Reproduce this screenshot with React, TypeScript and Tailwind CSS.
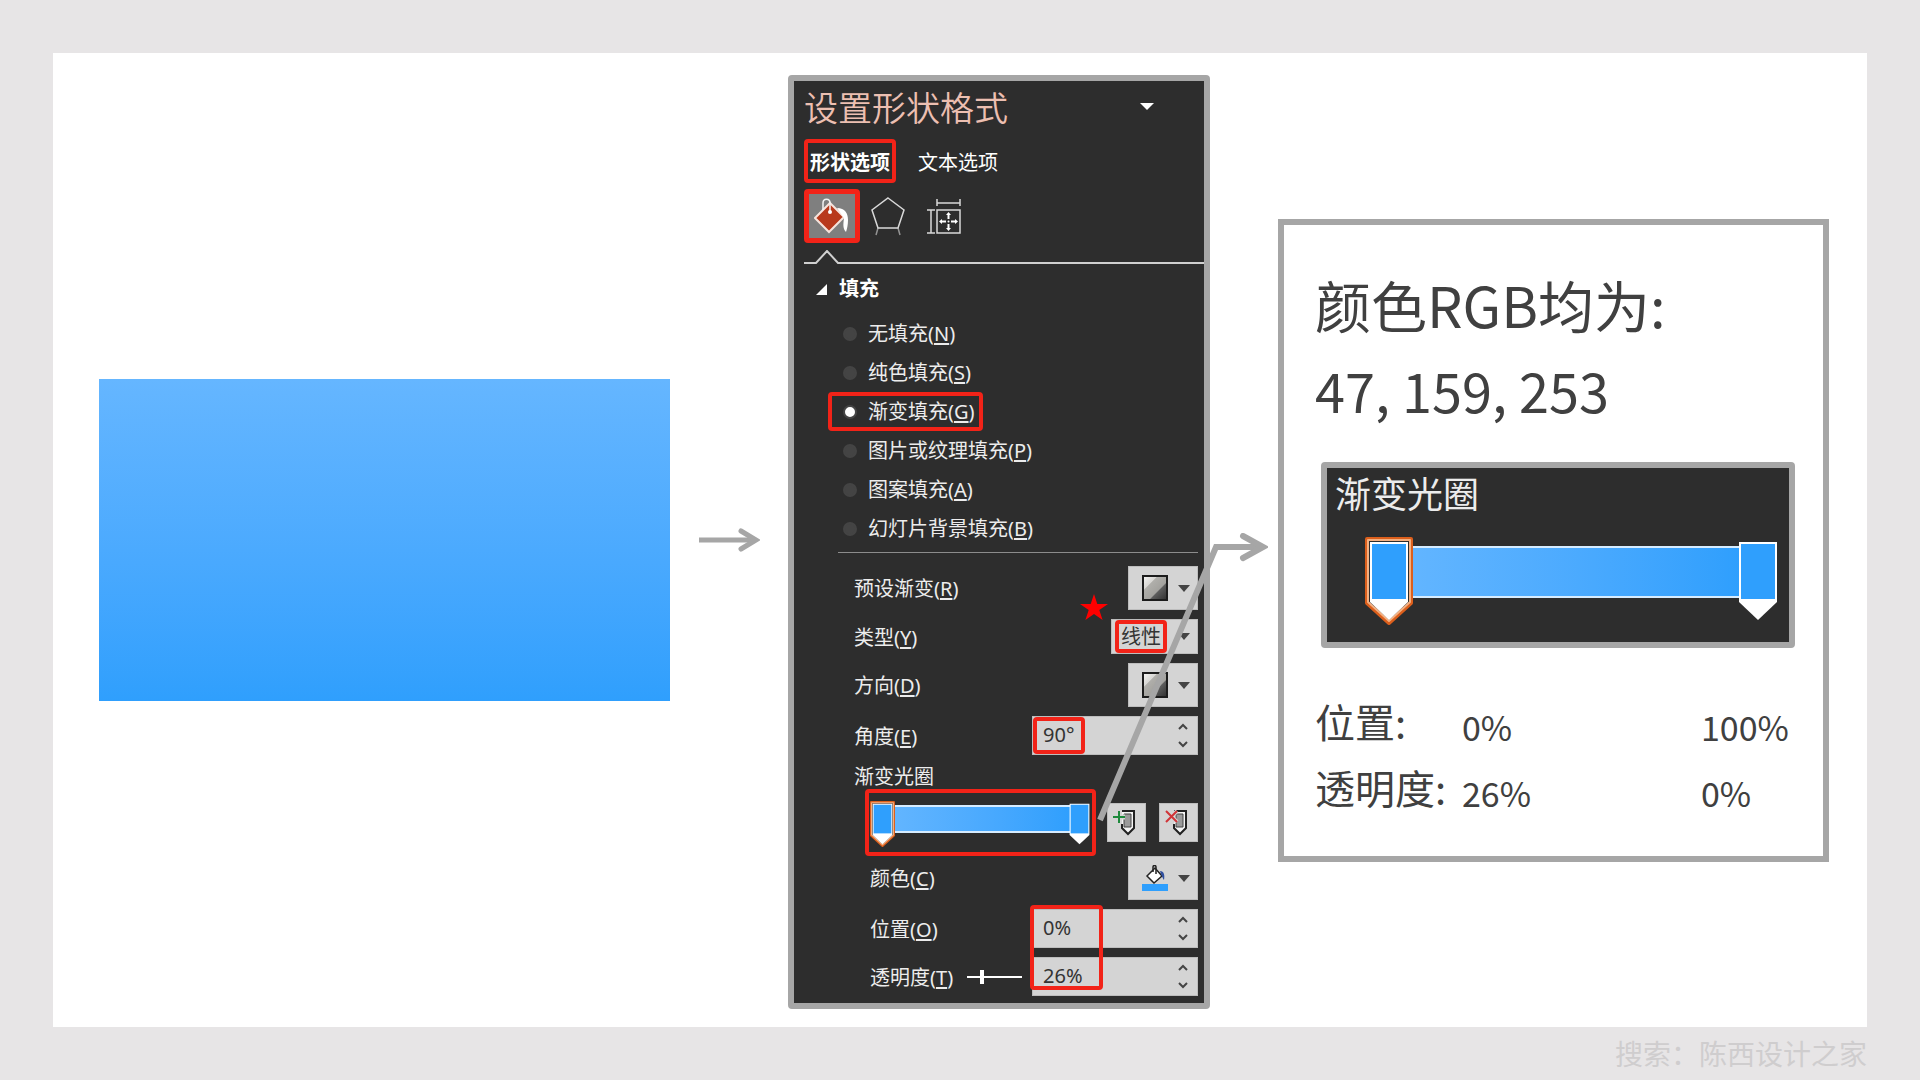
import { useState } from "react";
import type { ReactNode } from "react";

interface FillOption {
    id: string;
    label: string;
    hotkey: string;
}

const fillOptions: FillOption[] = [
    { id: "none", label: "无填充", hotkey: "N" },
    { id: "solid", label: "纯色填充", hotkey: "S" },
    { id: "gradient", label: "渐变填充", hotkey: "G" },
    { id: "picture", label: "图片或纹理填充", hotkey: "P" },
    { id: "pattern", label: "图案填充", hotkey: "A" },
    { id: "slide", label: "幻灯片背景填充", hotkey: "B" },
];

const stopRows = [
    { label: "位置:", first: "0%", last: "100%" },
    { label: "透明度:", first: "26%", last: "0%" },
];

function Hotkey({ label, hotkey }: { label: string; hotkey: string }) {
    return (
        <span className="whitespace-nowrap">
            {label}(<span className="underline underline-offset-2">{hotkey}</span>)
        </span>
    );
}

function Field({
    id,
    label,
    hotkey,
    indent,
    extra,
    children,
}: {
    id: string;
    label: string;
    hotkey: string;
    indent?: boolean;
    extra?: ReactNode;
    children: ReactNode;
}) {
    return (
        <div className={`flex items-center ${indent ? "pl-4" : ""}`}>
            <label htmlFor={id} className="pt-0.5">
                <Hotkey label={label} hotkey={hotkey} />
            </label>
            {extra}
            <div className="ml-auto">{children}</div>
        </div>
    );
}

function Caret() {
    return (
        <svg className="h-[7px] w-3" viewBox="0 0 12 7" aria-hidden="true">
            <path d="M0 0h12L6 7z" fill="#444" />
        </svg>
    );
}

function Swatch() {
    return (
        <span className="h-[26px] w-[26px] border-2 border-[#1c1c1c] bg-[linear-gradient(135deg,#f2f2f0_0%,#d8d7d4_28%,#b0afab_30%,#a3a29e_62%,#5c5c5c_66%,#333_100%)]" />
    );
}

function DropButton({
    id,
    children,
}: {
    id: string;
    children: ReactNode;
}) {
    return (
        <button
            id={id}
            type="button"
            className="flex h-11 w-[70px] items-center justify-between border border-[#bdbdbd] bg-[#d4d4d4] pr-[7px] pl-[13px]"
        >
            {children}
            <Caret />
        </button>
    );
}

function Spinner({
    id,
    value,
    marked,
}: {
    id: string;
    value: string;
    marked?: boolean;
}) {
    const [text, setText] = useState(value);

    return (
        <div className="relative flex h-[39px] w-[166px] border border-[#bdbdbd] bg-[#d4d4d4]">
            <input
                id={id}
                type="text"
                value={text}
                onChange={(e) => setText(e.target.value)}
                className="min-w-0 flex-1 bg-transparent pb-0.5 pl-2.5 text-[#333] outline-none"
            />
            <div className="flex w-7 flex-col items-center justify-between py-1">
                <button type="button" aria-label="增加" className="h-3">
                    <svg className="h-3 w-3" viewBox="0 0 12 12" fill="none" stroke="#444" strokeWidth="2">
                        <path d="M2 8l4-4 4 4" />
                    </svg>
                </button>
                <button type="button" aria-label="减少" className="h-3">
                    <svg className="h-3 w-3" viewBox="0 0 12 12" fill="none" stroke="#444" strokeWidth="2">
                        <path d="M2 4l4 4 4-4" />
                    </svg>
                </button>
            </div>
            {marked && (
                <span className="pointer-events-none absolute inset-y-0 left-0 w-[52px] rounded border-4 border-[#f22318]" />
            )}
        </div>
    );
}

function StopHandle({ selected, large }: { selected?: boolean; large?: boolean }) {
    return (
        <button
            type="button"
            aria-label="渐变光圈"
            className={`relative shrink-0 ${large ? "h-[88px] w-12" : "h-[46px] w-[25px]"}`}
        >
            <svg className="h-full w-full" viewBox="0 0 48 88" aria-hidden="true">
                {selected && (
                    <>
                        <path d="M2 2h44v64L24 86 2 66z" fill="#2d2d2d" stroke="#dc5f1c" strokeWidth="4" strokeLinejoin="round" />
                        <path d="M3 3h42v62L24 84 3 65z" fill="none" stroke="#f3b183" strokeWidth="2" strokeLinejoin="round" />
                    </>
                )}
                <path d="M5 5h38v60L24 83 5 65z" fill="#fff" />
                <path d="M7 7h34v55H7z" fill="#2f9ffd" />
            </svg>
        </button>
    );
}

function GradientBar({ large }: { large?: boolean }) {
    return (
        <div className="flex items-start">
            <StopHandle selected large={large} />
            <div
                className={`flex-1 border-y-2 border-[#d6ecff] bg-linear-to-r from-[#62b5ff] to-[#2f9ffd] ${
                    large ? "mt-[9px] -mr-1.5 h-[52px]" : "mt-1 -mr-1 h-7"
                }`}
            />
            <StopHandle large={large} />
        </div>
    );
}

function StopIcon({ remove }: { remove?: boolean }) {
    return (
        <svg className="h-7 w-6" viewBox="0 0 24 28" fill="none" aria-hidden="true">
            <path d="M9 2h12v17l-6 6-6-6v-4" fill="#f4f4f4" stroke="#222" strokeWidth="2" />
            <path d="M11 5h7v13h-7z" fill="#9b9b9b" stroke="#444" strokeWidth="1" />
            {remove ? (
                <path d="M1 2l11 11M12 2L1 13" stroke="#d4d4d4" strokeWidth="4" />
            ) : (
                <path d="M1 8h11M6 2v12" stroke="#d4d4d4" strokeWidth="5" />
            )}
            {remove ? (
                <path d="M1 2l11 11M12 2L1 13" stroke="#d13438" strokeWidth="2" />
            ) : (
                <path d="M0 8h12M6 2v12" stroke="#1e8a3c" strokeWidth="2" />
            )}
        </svg>
    );
}

function FormatPanel() {
    const [fill, setFill] = useState("gradient");
    const [alpha, setAlpha] = useState(26);

    return (
        <section className="relative mt-1 w-[422px] shrink-0 rounded border-[6px] border-[#a6a6a6] bg-[#2d2d2d] pb-[7px] pl-2.5 text-xl leading-6 text-[#ececec]">
            <header className="flex h-[54px] items-center justify-between pr-[50px]">
                <h1 className="text-[34px] leading-10 font-[350] text-[#ecbfb1]">设置形状格式</h1>
                <button type="button" aria-label="任务窗格选项" className="pb-1">
                    <svg className="h-[7px] w-3.5" viewBox="0 0 14 7" aria-hidden="true">
                        <path d="M0 0h14L7 7z" fill="#fff" />
                    </svg>
                </button>
            </header>

            <div className="mt-1 flex gap-[22px]">
                <button type="button" className="h-11 rounded border-4 border-[#f22318] px-0.5 pt-1 font-bold text-white">
                    形状选项
                </button>
                <button type="button" className="pt-1 text-white">
                    文本选项
                </button>
            </div>

            <div className="mt-1.5 flex items-center gap-2.5">
                <button
                    type="button"
                    aria-label="填充与线条"
                    className="flex h-[54px] w-14 items-center justify-center rounded border-[5px] border-[#f22318] bg-[#7f7f7f]"
                >
                    <svg className="h-9 w-9" viewBox="0 0 36 36" fill="none" aria-hidden="true">
                        <path d="M1 20L16 5l14 14-15 15z" fill="#b8391c" stroke="#f6e3dc" strokeWidth="2" />
                        <path d="M9 12V5c0-5 7-5 7 0v9" stroke="#f4f4f4" strokeWidth="1.5" />
                        <circle cx="16" cy="14" r="2" fill="#fff" />
                        <path d="M23 10c8 0 11 5 11 12 0 5-1 9-2 12-3-3-3-7-2-14z" fill="#fff" />
                    </svg>
                </button>
                <button type="button" aria-label="效果">
                    <svg className="h-10 w-9" viewBox="0 0 36 40" fill="none" stroke="#d9d9d9" strokeWidth="1.5" aria-hidden="true">
                        <path d="M18 2l16 12-6 18H8L2 14z" />
                        <path d="M8 32l-2 7M28 32l2 7" opacity=".6" />
                    </svg>
                </button>
                <button type="button" aria-label="大小与属性" className="ml-2.5">
                    <svg className="h-9 w-9" viewBox="0 0 36 36" fill="none" stroke="#d9d9d9" strokeWidth="1.5" aria-hidden="true">
                        <path d="M11 12h23v23H11zM11 1v7M34 1v7M11 5h23M1 12h8M1 35h8M5 12v23" />
                        <path d="M22.5 16v5M22.5 26v5M15 23.5h5M25 23.5h5" strokeWidth="2" stroke="#fff" />
                        <path d="M20 17l2.5-3 2.5 3zM20 30l2.5 3 2.5-3zM16 21l-3 2.500 3 2.500zM29 21l3 2.500-3 2.500z" fill="#fff" stroke="none" />
                        <circle cx="22.5" cy="23.5" r="1" fill="#fff" stroke="none" />
                    </svg>
                </button>
            </div>

            <div className="mt-[7px] flex items-end">
                <svg className="h-3.5 w-9 shrink-0" viewBox="0 0 36 14" fill="none" stroke="#d0d0d0" strokeWidth="2" aria-hidden="true">
                    <path d="M0 13h12L23 1l11 12h2" />
                </svg>
                <div className="h-0.5 flex-1 bg-[#d0d0d0]" />
            </div>

            <h2 className="flex h-[50px] items-center gap-3 pl-3 font-bold text-white">
                <svg className="h-[11px] w-[11px]" viewBox="0 0 11 11" aria-hidden="true">
                    <path d="M11 0v11H0z" fill="#fff" />
                </svg>
                填充
            </h2>

            <div role="radiogroup" aria-label="填充" className="flex flex-col items-start pl-6">
                {fillOptions.map((option) => (
                    <label
                        key={option.id}
                        className={`flex h-[39px] items-center gap-[11px] rounded border-4 pr-1 pl-[11px] ${
                            fill === option.id ? "border-[#f22318]" : "border-transparent"
                        }`}
                    >
                        <input
                            type="radio"
                            name="fill"
                            checked={fill === option.id}
                            onChange={() => setFill(option.id)}
                            className="h-3.5 w-3.5 appearance-none rounded-full border-2 border-[#444] bg-[#444] checked:bg-white"
                        />
                        <Hotkey label={option.label} hotkey={option.hotkey} />
                    </label>
                ))}
            </div>

            <hr className="mt-1 mr-1.5 ml-[34px] border-[#8c8c8c]" />

            <div className="mt-[13px] mr-1.5 ml-[50px] flex flex-col gap-[9px]">
                <Field id="preset" label="预设渐变" hotkey="R">
                    <DropButton id="preset">
                        <Swatch />
                    </DropButton>
                </Field>

                <Field id="type" label="类型" hotkey="Y">
                    <div className="relative flex h-[35px] w-[87px] items-center border border-[#bdbdbd] bg-[#d4d4d4]">
                        <select
                            id="type"
                            className="h-full w-full appearance-none bg-transparent pl-[9px] text-[#333] outline-none"
                        >
                            <option>线性</option>
                            <option>射线</option>
                        </select>
                        <span className="pointer-events-none absolute right-[7px] flex">
                            <Caret />
                        </span>
                        <span className="pointer-events-none absolute inset-y-0 left-[3px] w-[52px] rounded border-4 border-[#f22318]" />
                        <svg className="pointer-events-none absolute -top-[26px] -left-8 h-[26px] w-7" viewBox="0 0 28 26" aria-hidden="true">
                            <path d="M14 0l3.3 10H28l-8.7 6.1L22.6 26 14 19.9 5.4 26l3.3-9.9L0 10h10.7z" fill="#f00" />
                        </svg>
                    </div>
                </Field>

                <Field id="direction" label="方向" hotkey="D">
                    <DropButton id="direction">
                        <Swatch />
                    </DropButton>
                </Field>

                <Field id="angle" label="角度" hotkey="E">
                    <Spinner id="angle" value="90°" marked />
                </Field>

                <div>
                    <p className="pt-px">渐变光圈</p>
                    <div className="flex h-[67px] items-center justify-between pl-[11px]">
                        <div className="h-full w-[231px] rounded border-4 border-[#f22318] pt-2 pl-px">
                            <GradientBar />
                        </div>
                        <div className="flex gap-[13px]">
                            <button
                                type="button"
                                aria-label="添加渐变光圈"
                                className="flex h-[39px] w-[39px] items-center border border-[#bdbdbd] bg-[#d4d4d4] pl-[5px]"
                            >
                                <StopIcon />
                            </button>
                            <button
                                type="button"
                                aria-label="删除渐变光圈"
                                className="flex h-[39px] w-[39px] items-center border border-[#bdbdbd] bg-[#d4d4d4] pl-[5px]"
                            >
                                <StopIcon remove />
                            </button>
                        </div>
                    </div>
                    <Field id="color" label="颜色" hotkey="C" indent>
                        <DropButton id="color">
                            <svg className="h-[26px] w-[26px]" viewBox="0 0 26 26" fill="none" aria-hidden="true">
                                <path d="M5 11l8-8 7 8-8 7z" fill="#fff" stroke="#222" strokeWidth="1.5" />
                                <path d="M11 7V2c0-2 3-2 3 0v7" stroke="#222" strokeWidth="1.5" />
                                <path d="M18 6c4 0 5 4 4 9-1-1-2-4-3-6z" fill="#2f4f9f" />
                                <path d="M0 19h26v7H0z" fill="#2f9ffd" />
                            </svg>
                        </DropButton>
                    </Field>
                </div>

                <div className="relative flex flex-col gap-[9px]">
                    <Field id="position" label="位置" hotkey="O" indent>
                        <Spinner id="position" value="0%" />
                    </Field>
                    <Field
                        id="alpha"
                        label="透明度"
                        hotkey="T"
                        indent
                        extra={
                            <input
                                type="range"
                                aria-label="透明度"
                                value={alpha}
                                onChange={(e) => setAlpha(Number(e.target.value))}
                                className="ml-3.5 h-3.5 w-[55px] appearance-none bg-[linear-gradient(#fff,#fff)] bg-[length:100%_2px] bg-center bg-no-repeat [&::-webkit-slider-thumb]:h-3.5 [&::-webkit-slider-thumb]:w-1 [&::-webkit-slider-thumb]:appearance-none [&::-webkit-slider-thumb]:bg-white"
                            />
                        }
                    >
                        <Spinner id="alpha" value="26%" />
                    </Field>
                    <span className="pointer-events-none absolute -top-1 right-[95px] bottom-1.5 w-[73px] rounded border-4 border-[#f22318]" />
                </div>
            </div>

            {/* Leader line from the stops bar to the notes */}
            <svg
                className="pointer-events-none absolute -right-16 bottom-[180px] h-[290px] w-[172px]"
                viewBox="0 0 172 290"
                fill="none"
                stroke="#a6a6a6"
                strokeWidth="6"
                aria-hidden="true"
            >
                <path d="M4 287L120 14h48" />
                <path d="M147 3l20 11-20 11" strokeLinecap="round" />
            </svg>
        </section>
    );
}

function NotesPanel() {
    return (
        <section className="w-[551px] shrink-0 border-[6px] border-[#a6a6a6] px-[31px] pt-9 pb-9 font-['Noto_Sans_CJK_SC',sans-serif] text-[#404040]">
            <p className="text-[56px] leading-[86px]">颜色RGB均为:</p>
            <p className="text-[54px] leading-[86px]">47, 159, 253</p>

            <div className="mt-[29px] ml-1.5 h-[186px] w-[474px] rounded border-[6px] border-[#a6a6a6] bg-[#2d2d2d] pt-0.5 pr-[7px] pl-2">
                <p className="text-4xl leading-[44px] text-[#ececec]">渐变光圈</p>
                <div className="mt-[23px] pl-[30px]">
                    <GradientBar large />
                </div>
            </div>

            <table className="mt-10 w-full text-left">
                <tbody>
                    {stopRows.map((row) => (
                        <tr key={row.label} className="h-[66px]">
                            <th scope="row" className="w-[147px] text-[40px] leading-[60px] font-normal">
                                {row.label}
                            </th>
                            <td className="w-[239px] pt-3 text-[34px] leading-10">{row.first}</td>
                            <td className="pt-3 text-[34px] leading-10">{row.last}</td>
                        </tr>
                    ))}
                </tbody>
            </table>
        </section>
    );
}

export default function App() {
    return (
        <div className="flex min-h-screen flex-col bg-[#e7e5e6] px-[53px] pt-[53px] font-['Noto_Sans','Noto_Sans_CJK_SC',sans-serif]">
            <main className="flex flex-1 items-center bg-white py-3 pr-[38px] pl-[46px]">
                <div className="h-[322px] flex-1 bg-linear-to-b from-[#65b6ff] to-[#2f9ffd]" />
                <svg className="mr-7 ml-[29px] h-6 w-[61px] shrink-0" viewBox="0 0 61 24" fill="none" stroke="#a6a6a6" strokeWidth="5" aria-hidden="true">
                    <path d="M0 12h56" />
                    <path d="M42 3l15 9-15 9" strokeLinecap="round" />
                </svg>
                <FormatPanel />
                <div className="w-[68px] shrink-0" />
                <NotesPanel />
            </main>
            <footer className="flex h-[53px] items-center justify-end text-[28px] text-[#cfcdce]">
                搜索：陈西设计之家
            </footer>
        </div>
    );
}
